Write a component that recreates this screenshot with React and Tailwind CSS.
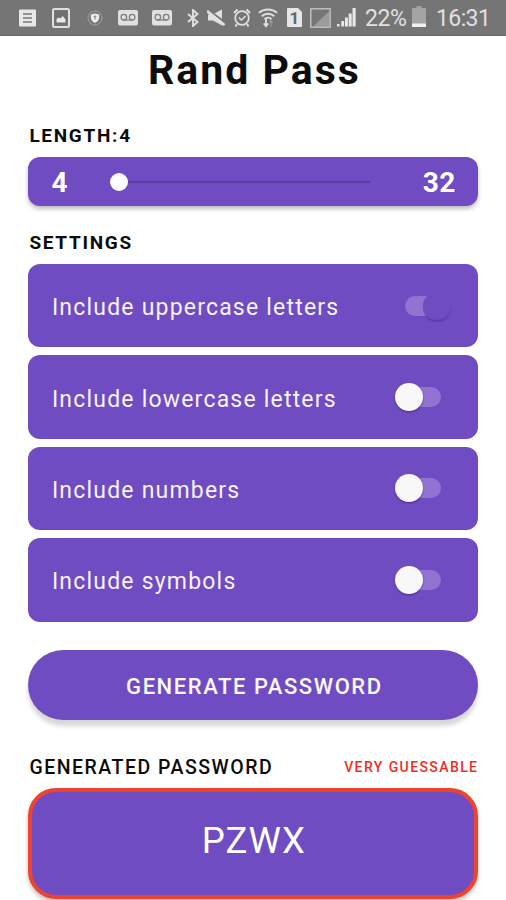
import React, { useState } from 'react';

const settings = [
  { id: 'upper', label: 'Include uppercase letters' },
  { id: 'lower', label: 'Include lowercase letters' },
  { id: 'numbers', label: 'Include numbers' },
  { id: 'symbols', label: 'Include symbols' },
];

function VoicemailIcon({ className }) {
  return (
    <svg className={className} width="20" height="16" viewBox="0 0 20 16" fill="none">
      <rect width="20" height="15.5" rx="2" fill="#e0e0e0" />
      <g stroke="#808080" strokeWidth="1.3">
        <circle cx="5.8" cy="7.2" r="2.8" />
        <circle cx="14.2" cy="7.2" r="2.8" />
        <path d="M5.8 10h8.4" />
      </g>
    </svg>
  );
}

function StatusBar() {
  return (
    <header className="flex h-9 shrink-0 items-center border-b border-[#666] bg-[#757575] pl-[19px] text-[#e0e0e0]">
      {/* Notifications */}
      <svg className="shrink-0" width="17" height="18" viewBox="0 0 17 18">
        <rect y="0.5" width="17" height="17" rx="1" fill="#e8e8e8" />
        <path d="M4 5h9M4 9h9M4 13h9" stroke="#777" strokeWidth="1.3" />
      </svg>
      <svg className="ml-4 shrink-0" width="18" height="20" viewBox="0 0 18 20" fill="none">
        <rect x="1" y="1" width="16" height="18" rx="1.5" stroke="#e0e0e0" strokeWidth="2" />
        <rect x="3" y="3" width="12" height="13" fill="#707070" />
        <path d="M4.5 14.5V11L7 9.5l1.500 1L10.700 8l2.800 3.500v3z" fill="#e8e8e8" />
      </svg>
      <svg className="ml-[17px] shrink-0" width="16" height="16" viewBox="0 0 16 16" fill="none">
        <circle cx="8" cy="8" r="7" stroke="#a2a2a2" />
        <path d="M8 3.4l4.200 1.200v3c0 2.400-1.700 4.400-4.200 5.500-2.500-1.100-4.200-3.100-4.200-5.500v-3z" fill="#ececec" />
        <path d="M8 5.5v4M6.700 6.500h2.600" stroke="#888" strokeWidth="1.2" />
      </svg>
      <VoicemailIcon className="ml-[15px] shrink-0" />
      <VoicemailIcon className="ml-[14px] shrink-0" />
      {/* Bluetooth */}
      <svg className="ml-[15px] shrink-0" width="12" height="18" viewBox="0 0 12 18" fill="none">
        <path d="M1 5l9.500 8L6 17V1l4.500 4L1 13" stroke="currentColor" strokeWidth="1.9" />
      </svg>
      {/* Muted */}
      <svg className="ml-2 shrink-0" width="18" height="18" viewBox="0 0 18 18">
        <path d="M1 5.5h4.500L15 0.500v16L6 11.500H1z" fill="currentColor" />
        <path d="M1 0.5l17 13" stroke="#757575" strokeWidth="2" />
        <path d="M0 2l17.500 14" stroke="currentColor" strokeWidth="2.6" />
      </svg>
      {/* Alarm */}
      <svg className="ml-2 shrink-0" width="18" height="20" viewBox="0 0 18 20" fill="none" stroke="currentColor">
        <circle cx="9" cy="10" r="6.8" strokeWidth="1.7" />
        <path d="M5.8 9.500l2.600 2.500 4.200-4" strokeWidth="1.5" />
        <path d="M1 5l3.500-3.500M17 5l-3.500-3.500M4 16l-1.500 2.500M14 16l1.500 2.500" strokeWidth="2" />
      </svg>
      {/* Wifi */}
      <svg className="ml-[7px] shrink-0" width="20" height="20" viewBox="0 0 20 20" fill="none" stroke="currentColor">
        <path d="M1 4.800c5-4.400 13-4.400 18 0M3.800 8.200c3.500-3.400 8.900-3.400 12.400 0M6.500 11.200c2-1.900 5-1.900 7 0" strokeWidth="2" />
        <path d="M8 11v6.500M5.800 15.500L8 18.300l2.200-2.800" strokeWidth="1.9" />
        <path d="M13 19v-6M11.300 14.500L13 12.500l1.700 2" stroke="#999" strokeWidth="1.2" />
      </svg>
      {/* SIM */}
      <div className="relative ml-[9px] h-[19px] w-[15px] shrink-0">
        <svg width="15" height="19" viewBox="0 0 15 19">
          <path d="M1 0h10l4 4v14a1 1 0 0 1-1 1H1a1 1 0 0 1-1-1V1a1 1 0 0 1 1-1z" fill="#e6e6e6" />
        </svg>
        <span className="absolute inset-0 text-center text-[17px] font-bold leading-[20px] text-[#666]">1</span>
      </div>
      <svg className="ml-2 shrink-0" width="21" height="20" viewBox="0 0 21 20" fill="none">
        <path d="M19.5 3v15.500H3z" fill="#9c9c9c" />
        <rect x="0.8" y="0.8" width="19.4" height="18.4" stroke="#c4c4c4" strokeWidth="1.4" />
      </svg>
      <svg className="ml-[6px] shrink-0" width="20" height="19" viewBox="0 0 20 19" fill="#e8e8e8">
        <path d="M0 16h2.500v2.500H0zM4.300 13h2.800v5.500H4.300zM8 9.500h2.900v9H8zM11.700 5.500h3v13h-3zM15.500 0h3.200v18.500h-3.200z" />
      </svg>
      <span className="ml-[8px] mt-px w-[42px] text-[23px] leading-none tracking-[-0.4px]">22%</span>
      <svg className="ml-[5px] mb-[2px] shrink-0" width="14" height="21" viewBox="0 0 14 21">
        <path d="M4.5 0h5v2H14v19H0V2h4.500z" fill="#a4a4a4" />
        <path d="M0 17.500h14V21H0z" fill="#f0f0f0" />
      </svg>
      <span className="ml-[10px] mt-px text-[23px] leading-none tracking-[-0.6px]">16:31</span>
    </header>
  );
}

function Switch({ on, onClick }) {
  return (
    <button onClick={onClick} className="relative mr-[9px] h-5 w-[36px] rounded-full bg-[#9273d2]">
      {on ? (
        <span className="absolute -top-[4px] left-[18px] size-7 rounded-full bg-[#6f4cc2] shadow-[0_2px_1px_rgba(50,20,110,0.3)]" />
      ) : (
        <span className="absolute -top-[4px] -left-[10px] size-7 rounded-full bg-[#f8f8f8] shadow-[0_1px_2px_rgba(40,10,90,0.5)]" />
      )}
    </button>
  );
}

export default function App() {
  const [enabled, setEnabled] = useState({ upper: true });

  const toggle = (id) => setEnabled({ ...enabled, [id]: !enabled[id] });

  return (
    <div className="flex h-[900px] w-full flex-col overflow-hidden bg-white font-[Roboto,sans-serif] text-[#0c0c0c]">
      <StatusBar />

      <main className="flex flex-col pl-[28.4px] pr-[27.6px]">
        <h1 className="mt-[13px] pl-[2px] text-center text-[41px] font-bold leading-[42px] tracking-[2px]">Rand Pass</h1>

        {/* Length */}
        <h2 className="mt-[35px] h-[31px] pl-px text-[19px] font-bold leading-5 tracking-[1.7px]">LENGTH:4</h2>
        <div className="flex h-[49px] items-center rounded-[12px] bg-[#704cc2] pl-[23px] pr-[22.5px] text-[28px] font-bold text-white shadow-[0_3px_4px_rgba(0,0,0,0.25)]">
          <span className="w-[58.5px] pt-[3px] leading-none">4</span>
          <div className="flex flex-1 items-center">
            <span className="size-[18px] rounded-full bg-white" />
            <span className="h-[2px] w-[242px] bg-[#5d3a9f]" />
          </div>
          <span className="pt-[3px] leading-none tracking-[0.5px]">32</span>
        </div>

        {/* Settings */}
        <h2 className="mt-[27px] h-[31px] pl-px text-[19px] font-bold leading-5 tracking-[1.7px]">SETTINGS</h2>
        <div className="flex flex-col gap-[8px]">
          {settings.map((s) => (
            <div key={s.id} className="flex h-[83.4px] items-center justify-between rounded-[12px] bg-[#704cc2] pl-[23.5px] pr-[28.5px]">
              <span className="pt-[4px] text-[23px] leading-none tracking-[1.2px] text-[#f7f2ff]">{s.label}</span>
              <Switch on={enabled[s.id]} onClick={() => toggle(s.id)} />
            </div>
          ))}
        </div>

        <button className="mt-[28.4px] h-[70px] rounded-full bg-[#704cc2] pl-[2px] pt-[3px] text-[22px] font-medium tracking-[1.55px] text-[#fbf8ff] shadow-[0_6px_4px_rgba(0,0,0,0.16)]">
          GENERATE PASSWORD
        </button>

        {/* Result */}
        <div className="mt-[37px] flex h-[31px] justify-between pl-px leading-5">
          <h2 className="pt-px text-[19.5px] font-medium tracking-[1.5px]">GENERATED PASSWORD</h2>
          <span className="text-[14px] font-medium tracking-[1.4px] text-[#f02e24]">VERY GUESSABLE</span>
        </div>
        <div className="flex h-[111px] items-center justify-center rounded-[28px] border-[4px] border-[#ee442f] bg-[#704cc2] text-[36.5px] text-white shadow-[0_3px_4px_rgba(0,0,0,0.25)]">
          <span className="mb-[5px] ml-px leading-none tracking-[1.2px]">PZWX</span>
        </div>
      </main>
    </div>
  );
}
